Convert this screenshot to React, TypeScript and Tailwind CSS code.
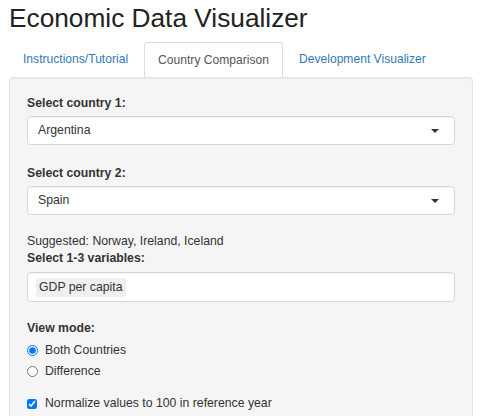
import React from "react";

function SelectBox({ value }: { value: string }) {
  return (
    <div className="mt-[4px] flex h-[29px] items-center justify-between rounded-[3.5px] border border-[#d6d6d6] bg-white pl-[10px] pr-[15px] shadow-[inset_0_1px_1px_rgba(0,0,0,0.06)]">
      <span className="text-[12.25px] leading-[17px] text-[#333]">{value}</span>
      <span className="h-0 w-0 border-x-[4px] border-t-[4px] border-x-transparent border-t-[#333]" />
    </div>
  );
}

export default function App() {
  const font = { fontFamily: '"Liberation Sans", Arial, Helvetica, sans-serif' };
  return (
    <div className="px-[9px] text-[#333]" style={font}>
      <h1 className="pt-[4px] pb-[9px] text-[26.25px] font-normal leading-[29px] text-[#222]">
        Economic Data Visualizer
      </h1>

      <div className="flex h-[35px] text-[12.1px] leading-[17px]">
        <div className="mr-[2px] flex items-center border border-transparent px-[13px] text-[#337ab7]">
          Instructions/Tutorial
        </div>
        <div className="mr-[2px] flex items-center rounded-t-[3.5px] border border-b-0 border-[#dddddd] bg-white px-[13px] text-[#555]">
          Country Comparison
        </div>
        <div className="flex items-center border border-transparent px-[13px] text-[#337ab7]">
          Development Visualizer
        </div>
      </div>

      <div className="rounded-[3.5px] border border-[#e3e3e3] bg-[#f5f5f5] px-[17px] pt-[17px] pb-[20px] text-[12.25px] leading-[17px] shadow-[inset_0_1px_1px_rgba(0,0,0,0.05)]">
        <div className="font-bold">Select country 1:</div>
        <SelectBox value="Argentina" />

        <div className="mt-[20px] font-bold">Select country 2:</div>
        <SelectBox value="Spain" />

        <div className="mt-[18px]">Suggested: Norway, Ireland, Iceland</div>
        <div className="font-bold">Select 1-3 variables:</div>
        <div className="mt-[5px] flex h-[30px] items-center rounded-[3.5px] border border-[#d6d6d6] bg-white pl-[8px] shadow-[inset_0_1px_1px_rgba(0,0,0,0.06)]">
          <span className="rounded-[2px] bg-[#efefef] px-[3px] py-[1px] leading-[17px] text-[#333]">
            GDP per capita
          </span>
        </div>

        <div className="mt-[18px] font-bold">View mode:</div>
        <div className="mt-[5px] flex flex-col gap-[4px]">
          <label className="flex items-center">
            <input
              type="radio"
              name="mode"
              defaultChecked
              className="m-0 h-[11px] w-[11px] accent-[#0075ff]"
            />
            <span className="ml-[7px]">Both Countries</span>
          </label>
          <label className="flex items-center">
            <input
              type="radio"
              name="mode"
              className="m-0 h-[11px] w-[11px] accent-[#0075ff]"
            />
            <span className="ml-[7px]">Difference</span>
          </label>
        </div>

        <label className="mt-[15px] flex items-center">
          <input
            type="checkbox"
            defaultChecked
            className="m-0 h-[10px] w-[10px] accent-[#0075ff]"
          />
          <span className="ml-[8px]">Normalize values to 100 in reference year</span>
        </label>
      </div>
    </div>
  );
}
